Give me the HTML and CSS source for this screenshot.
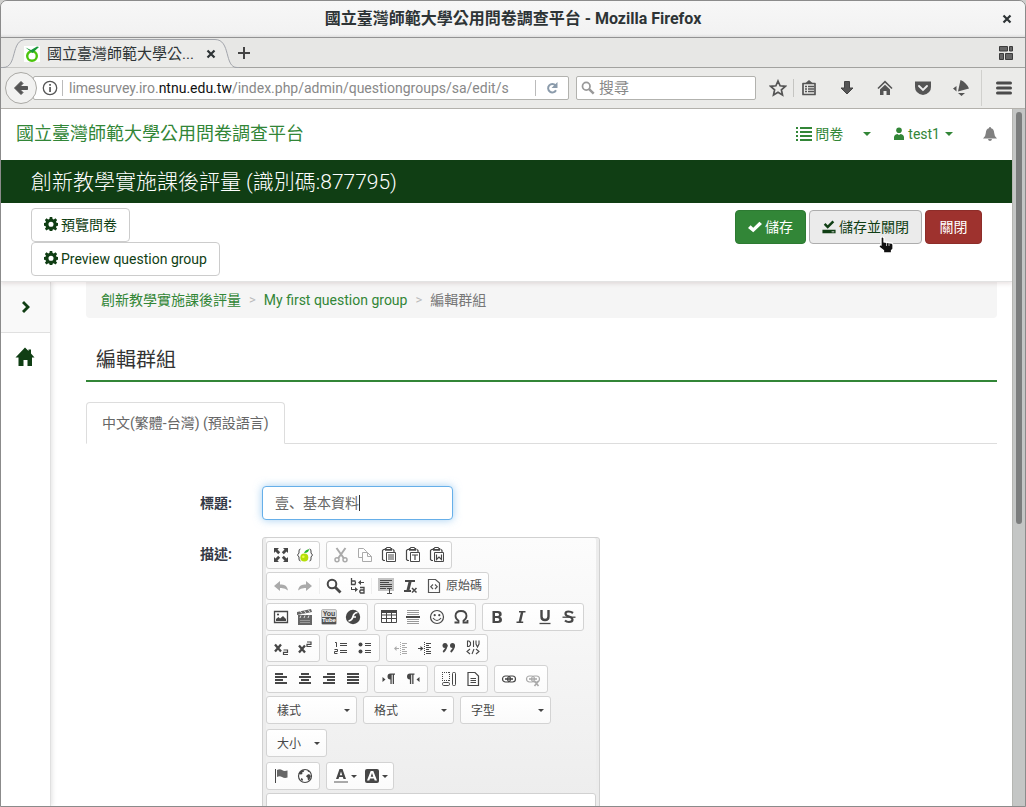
FILE: index.html
```html
<!DOCTYPE html>
<html lang="zh-Hant">
<head>
<meta charset="utf-8">
<title>國立臺灣師範大學公用問卷調查平台</title>
<link rel="stylesheet" href="styles.css">
</head>
<body>
<svg class="sprite" aria-hidden="true">
  <symbol id="gear" viewBox="0 0 16 16"><path fill-rule="evenodd" d="M6.600 0h2.800l.4 2.200 1.400.6 1.900-1.300 1.900 1.900-1.300 1.900.6 1.300 2.200.4v2.800l-2.200.4-.6 1.400 1.300 1.900-1.900 1.900-1.900-1.300-1.400.6-.4 2.200H6.600l-.4-2.200-1.400-.6-1.900 1.300L1 13.500l1.300-1.900-.6-1.400L-.5 9.800V7l2.200-.4.6-1.300L1 3.400l1.900-1.900 1.900 1.300 1.400-.6zM8 5.300a2.900 2.900 0 1 0 0 5.800 2.900 2.900 0 0 0 0-5.800z"/></symbol>
  <symbol id="check" viewBox="0 0 16 16"><path d="M0 9l3-3 3 2.800L13 2l3 2.600L6 14z"/></symbol>
  <symbol id="save" viewBox="0 0 16 16"><path d="M2 5.500L4 3.500 6.500 6 12 .500l2 2-7.500 7.500zM.500 11h15v4H.500z"/><path d="M11 13.500h3" stroke="#ebebeb"/></symbol>
  <symbol id="list" viewBox="0 0 16 14"><path d="M0 0h2v2H0zM4 0h12v2H4zM0 4h2v2H0zM4 4h12v2H4zM0 8h2v2H0zM4 8h12v2H4zM0 12h2v2H0zM4 12h12v2H4z"/></symbol>
  <symbol id="user" viewBox="0 0 12 14"><circle cx="6" cy="3.200" r="2.800"/><path d="M1 13V10.500q0-3 3.300-3.500l1.700 1 1.700-1Q11 7.500 11 10.500V13z"/></symbol>
  <symbol id="bell" viewBox="0 0 14 14"><path d="M7 0q1 0 1.100 1.200Q11 2 11.200 6q.2 4 2.800 5.500H0Q2.600 10 2.800 6 3 2 5.900 1.200 6 0 7 0zM5 12h4q-.3 2-2 2t-2-2z"/></symbol>
  <symbol id="chevron" viewBox="0 0 10 14"><path d="M1 3l2-2 6 6-6 6-2-2 4-4z"/></symbol>
  <symbol id="house" viewBox="0 0 20 20"><path d="M10 .500l3.500 3.500V2.500h2.500v4l3.500 4h-2.500V19h-4.500v-6h-4v6H3.500v-8.500H.500z"/></symbol>
  <symbol id="close" viewBox="0 0 10 10"><path d="M1.500 1.500l7 7m0-7l-7 7" stroke="currentColor" stroke-width="2.200"/></symbol>
  <symbol id="back" viewBox="0 0 16 16"><path d="M8 1.500l2 2L7 6.500h7.500v3H7l3 3-2 2L1.500 8z" stroke="currentColor" stroke-linejoin="round"/></symbol>
  <symbol id="info" viewBox="0 0 16 16"><circle cx="8" cy="8" r="6.700" fill="none" stroke="currentColor" stroke-width="1.300"/><path d="M7.200 4h1.700v1.700H7.200zM7.200 7h1.700v5H7.200z"/></symbol>
  <symbol id="reload" viewBox="0 0 12 12"><path d="M9.500 3.500A4.200 4.200 0 1 0 10 8.300" fill="none" stroke="currentColor" stroke-width="2"/><path d="M11.500 0v6h-6z"/></symbol>
  <symbol id="lens" viewBox="0 0 16 16"><circle cx="6" cy="6" r="4.300" fill="none" stroke="currentColor" stroke-width="2"/><path d="M9 9l5.500 5.500" stroke="currentColor" stroke-width="2.800"/></symbol>
  <symbol id="star" viewBox="0 0 18 18"><path d="M9 2l2.100 4.800 5.200.5-3.900 3.500 1.100 5.200L9 13.300 4.500 16l1.100-5.200-3.900-3.500 5.200-.5z" fill="none" stroke="currentColor" stroke-width="1.700"/></symbol>
  <symbol id="clip" viewBox="0 0 16 16"><path d="M2 3.500h12v11H2z" fill="none" stroke="currentColor" stroke-width="1.700" stroke-linejoin="round"/><path d="M4.500 3L8 0l3.500 3z"/><path d="M4 6.500h2m1 0h6M4 9h2m1 0h6M4 11.500h2m1 0h6" stroke="currentColor" stroke-width="1.300"/></symbol>
  <symbol id="down" viewBox="0 0 16 16"><path d="M5.500 1.500h5V8h3.500L8 14 2 8h3.500z" stroke="#444" stroke-linejoin="round"/></symbol>
  <symbol id="home" viewBox="0 0 16 16"><path d="M1 8.500L8 1.700l7 6.800" fill="none" stroke="currentColor" stroke-width="1.600"/><path d="M3 9.500l5-4.800 5 4.800V15H9.500v-4h-3v4H3z"/></symbol>
  <symbol id="pocket" viewBox="0 0 16 16"><path d="M0 1.500h16V7q0 6.500-8 8-8-1.500-8-8z"/><path d="M4 6l4 4 4-4" fill="none" stroke="#eee" stroke-width="1.900" stroke-linecap="round"/></symbol>
  <symbol id="addon" viewBox="0 0 16 16"><path d="M7.500 0Q13 2 16 8.500L5 11.500zM3.500 6v5.500L0 8.500zM5 13h7l-3.500 3z"/></symbol>
  <symbol id="grid" viewBox="0 0 14 14"><path d="M.500.500h8v4.500h-8zm10 0h3v4.500h-3zM.500 7.500h4v6h-4zm6 0h7v6h-7z" stroke="#3c3c3c"/></symbol>
  <symbol id="lime" viewBox="0 0 16 16"><circle cx="8" cy="10" r="4.800" fill="none" stroke="#4bc40c" stroke-width="2.400"/><path d="M1.500 1.500L7 4l6-3.500L15 1 8.500 7z" fill="#1a9a3a"/></symbol>

  <symbol id="maximize" viewBox="0 0 16 16"><path d="M1 1h5L4.500 2.500l2.700 2.700-2 2-2.700-2.700L1 6zM15 1v5l-1.500-1.500-2.700 2.700-2-2 2.700-2.700L10 1zM1 15v-5l1.500 1.500 2.700-2.700 2 2-2.700 2.700L6 15zM15 15h-5l1.500-1.500-2.700-2.700 2-2 2.700 2.700L15 10z"/></symbol>
  <symbol id="limebrace" viewBox="0 0 16 16"><path d="M3.500 2Q2 2 2 4v2L.500 8 2 10v2q0 2 1.500 2M12.500 2Q14 2 14 4v2l1.500 2L14 10v2q0 2-1.500 2" fill="none" stroke="currentColor"/><circle cx="7.300" cy="10.500" r="4" fill="#b5df09"/><circle cx="6.300" cy="9.800" r="1.300" fill="#ecff45"/><path d="M7 6q1-3 5-4 0 4-5 4" fill="#27b62d"/></symbol>
  <symbol id="cut" viewBox="0 0 16 16"><path d="M3.500 1L11 11.500M12.500 1L5 11.500" fill="none" stroke="currentColor" stroke-width="2"/><circle cx="4" cy="12.700" r="2" fill="none" stroke="currentColor" stroke-width="1.500"/><circle cx="12" cy="12.700" r="2" fill="none" stroke="currentColor" stroke-width="1.500"/></symbol>
  <symbol id="copy" viewBox="0 0 16 16"><path d="M5.500 10.500h-4v-9h5l3 3V6M5.500 5.500h5l4 4v5h-9zM10.500 5.500v4h4" fill="none" stroke="currentColor"/></symbol>
  <symbol id="paste" viewBox="0 0 16 16"><path d="M4 2.500H2.500l-1 1v9l1 1H4M12 2.500l1 1V5" fill="none" stroke="currentColor" stroke-width="1.200"/><path d="M4 3V1.500h1.500V.500h4v1H11V3zM5.500 5.500h9v9h-9z" fill="#fff" stroke="currentColor"/><path d="M4 2h7v1.500H4z"/></symbol>
  <symbol id="pastelines" viewBox="0 0 16 16"><use href="#paste"/><path d="M7 8h6M7 10h6M7 12h6" stroke="currentColor"/></symbol>
  <symbol id="pastetext" viewBox="0 0 16 16"><use href="#paste"/><path d="M7 8h6M10 8v5" stroke="currentColor" stroke-width="1.200"/></symbol>
  <symbol id="pasteword" viewBox="0 0 16 16"><use href="#paste"/><path d="M7.500 7.500v5L10 10l2.500 2.500v-5" fill="none" stroke="currentColor" stroke-width="1.200"/></symbol>
  <symbol id="undo" viewBox="0 0 16 16"><path d="M7 3v3.500q7-1 8 6-3-3-8-2.500v3L1 8z"/></symbol>
  <symbol id="redo" viewBox="0 0 16 16"><path d="M9 3v3.500q-7-1-8 6 3-3 8-2.500v3L15 8z"/></symbol>
  <symbol id="replace" viewBox="0 0 16 16"><path d="M1.500 0v6.500H5q1-2 0-3.500H1.500M10 9.500h4V15h-3.500q-1.500-1.500 0-3H14" fill="none" stroke="currentColor" stroke-width="1.300"/><path d="M8 4.500l3-2.500v2h3v1h-3v2zM8 11.500l-3-2.500v2H2v-2H1v3h4v2z"/></symbol>
  <symbol id="selectall" viewBox="0 0 16 16"><path d="M0 0h16v13H0z" fill="#c4c4c4"/><path d="M2 2.500h12M2 4.500h9M2 6.500h12M2 8.500h12M2 10.500h6M9 10.500h5M11.500 10.500v5M9 15.500h5" stroke="currentColor"/></symbol>
  <symbol id="removeformat" viewBox="0 0 16 16"><path d="M3 2h10v2H9.500l-2 8H9v2H2v-2h2.500l2-8H3z"/><path d="M10 10l4.500 4.500m0-4.500L10 14.500" stroke="currentColor" stroke-width="1.500"/></symbol>
  <symbol id="source" viewBox="0 0 16 16"><path d="M2.500 1.500h7l4 3.500v9.500h-11zM7 6.500L4.800 8.700 7 11m2-4.500l2.200 2.200L9 11" fill="none" stroke="currentColor" stroke-width="1.200"/></symbol>
  <symbol id="image" viewBox="0 0 16 16"><path d="M1.500 2.500h13v11h-13z" fill="none" stroke="currentColor" stroke-width="1.300"/><circle cx="5" cy="5.500" r="1.100"/><path d="M3 12v-2l2.500-2L7 9.500 10 7l3 3v2z"/></symbol>
  <symbol id="movie" viewBox="0 0 16 16"><path d="M1 6h14v10H1z" fill="#666"/><path d="M0 3L14 0l1 3L0 6z" fill="#666"/><path d="M3 2l2 2.500M7 1.500L9 4M11 .500L13 3M4 6.500L3 9M8 6.500L7 9M12 6.500l-1 2.500" stroke="#ddd"/><path d="M3 11.500h10M3 13.500h10" stroke="#999"/></symbol>
  <symbol id="flash" viewBox="0 0 16 16"><circle cx="8" cy="8" r="7.200"/><path d="M12.500 3.500q-3.500 0-4.500 4-1 4-4.500 4.500M7.500 8H11" fill="none" stroke="#fff" stroke-width="1.700"/></symbol>
  <symbol id="table" viewBox="0 0 16 16"><path d="M.500 2.500h15v11H.500zM.500 9.500h15M5.500 3v10.500M10.500 3v10.500M.500 6h15" fill="none" stroke="currentColor"/><path d="M0 1h16v3H0z"/></symbol>
  <symbol id="rule" viewBox="0 0 16 16"><path d="M2 1.500h12M2 3.500h12M2 5.500h12M2 10.500h12M2 12.500h12M2 14.500h12" stroke="#999"/><path d="M1 7h14v2H1z"/></symbol>
  <symbol id="smile" viewBox="0 0 16 16"><circle cx="8" cy="8" r="6.500" fill="none" stroke="currentColor" stroke-width="1.200"/><circle cx="5.700" cy="6.200" r="1.100"/><circle cx="10.300" cy="6.200" r="1.100"/><path d="M4 9q4 5 8 0" fill="none" stroke="currentColor" stroke-width="1.200"/></symbol>
  <symbol id="omega" viewBox="0 0 16 16"><path d="M1.500 13.500h4v-1.700Q2.500 9.800 2.500 6.800 2.700 2 8 2t5.500 4.800q0 3-3 5v1.700h4V11" fill="none" stroke="currentColor" stroke-width="1.800"/></symbol>
  <symbol id="bold" viewBox="0 0 16 16"><path fill-rule="evenodd" d="M3.500 2H9q3.700 0 3.700 3.200 0 2-1.800 2.600 2.100.5 2.100 2.900Q13 14 9 14H3.500zM6 4v3h2.300q1.800 0 1.800-1.500T8.300 4zm0 5v3h2.300q2 0 2-1.500T8.300 9z"/></symbol>
  <symbol id="italic" viewBox="0 0 16 16"><path d="M6 2h6.500v1.600h-2.200L8.200 12.400h2V14H3.500v-1.600h2.200L7.800 3.600H6z"/></symbol>
  <symbol id="underline" viewBox="0 0 16 16"><path d="M4.500 1v6.500q0 3.500 3.500 3.500t3.500-3.500V1" fill="none" stroke="currentColor" stroke-width="2.400"/><path d="M2.500 14.500h11" stroke="currentColor" stroke-width="1.300"/></symbol>
  <symbol id="strike" viewBox="0 0 16 16"><path d="M12 4q-2-1.500-4.500-1.500-3 0-3 2.200Q4.500 6.500 8 7.500t3.500 3.300Q11.500 13 8 13q-2.500 0-4-1.500" fill="none" stroke="currentColor" stroke-width="2.200"/><path d="M1.500 8.200h13" stroke="currentColor" stroke-width="1.300"/></symbol>
  <symbol id="subscript" viewBox="0 0 16 16"><path d="M2 4.500l6 7m0-7l-6 7" stroke="currentColor" stroke-width="2.300"/><path d="M10.500 10h4v2.300h-4v2.200H15" fill="none" stroke="currentColor" stroke-width="1.200"/></symbol>
  <symbol id="superscript" viewBox="0 0 16 16"><path d="M2 5.500l6 7m0-7l-6 7" stroke="currentColor" stroke-width="2.300"/><path d="M10 2h4v2.300h-4v2.200h4.500" fill="none" stroke="currentColor" stroke-width="1.200"/></symbol>
  <symbol id="numlist" viewBox="0 0 16 16"><path d="M2 2.500h1.500V7M1.500 9.500h3v2h-3v2h3M7 3.500h7M7 5.500h7M7 10.500h7M7 12.500h7" fill="none" stroke="currentColor"/></symbol>
  <symbol id="bullist" viewBox="0 0 16 16"><circle cx="3.500" cy="4.500" r="2"/><circle cx="3.500" cy="11.500" r="2"/><path d="M8 3.500h6M8 5.500h6M8 10.500h6M8 12.500h6" stroke="currentColor"/></symbol>
  <symbol id="outdent" viewBox="0 0 16 16"><path d="M7.500 2v13" stroke="currentColor" stroke-dasharray="1 1"/><path d="M9 3.500h5M9 5.500h3M9 7.500h5M9 9.500h3M9 11.500h5M9 13.500h5M2 8.500h4" stroke="currentColor"/><path d="M3.500 6v5L1 8.500z"/></symbol>
  <symbol id="indent" viewBox="0 0 16 16"><path d="M7.500 2v13" stroke="currentColor" stroke-dasharray="1 1"/><path d="M9 3.500h5M9 5.500h3M9 7.500h5M9 9.500h3M9 11.500h5M9 13.500h5M1 8.500h4" stroke="currentColor"/><path d="M3.500 6v5L6.500 8.500z"/></symbol>
  <symbol id="quote" viewBox="0 0 16 16"><circle cx="4" cy="5.500" r="2.500"/><circle cx="11.500" cy="5.500" r="2.500"/><path d="M5.700 5q0 4-3.500 7M13.200 5q0 4-3.500 7" fill="none" stroke="currentColor" stroke-width="1.700"/></symbol>
  <symbol id="div" viewBox="0 0 16 16"><path d="M2.500 1v5.500H4L5.500 5V2.500L4 1zM8.500.500V7M11 .500V4l1.500 3L14 4V.500M5 9l-3 2.500L5 14M11 9l3 2.500L11 14M9 9l-2 5" fill="none" stroke="currentColor" stroke-width="1.100"/></symbol>
  <symbol id="left" viewBox="0 0 16 16"><path d="M2 3h8M2 6h12M2 9h8M2 12h12" stroke="currentColor" stroke-width="2"/></symbol>
  <symbol id="center" viewBox="0 0 16 16"><path d="M4 3h8M2 6h12M4 9h8M2 12h12" stroke="currentColor" stroke-width="2"/></symbol>
  <symbol id="right" viewBox="0 0 16 16"><path d="M6 3h8M2 6h12M6 9h8M2 12h12" stroke="currentColor" stroke-width="2"/></symbol>
  <symbol id="justify" viewBox="0 0 16 16"><path d="M2 3h12M2 6h12M2 9h12M2 12h12" stroke="currentColor" stroke-width="2"/></symbol>
  <symbol id="ltr" viewBox="0 0 16 16"><path d="M1.500 6v5l3-2.500zM14 2.500v1.300h-1V13h-1.300V3.800h-1V13H9.400V8.500Q6.500 8.500 6.500 5.500t3-3z"/></symbol>
  <symbol id="rtl" viewBox="0 0 16 16"><path d="M14.500 6v5l-3-2.500zM9.500 2.500v1.300h-1V13H7.200V3.800h-1V13H4.900V8.500Q2 8.500 2 5.500t3-3z"/></symbol>
  <symbol id="blocks" viewBox="0 0 16 16"><path d="M1.500 1v9M8.500 1v9M1 1.500h8M1 9.500h8" fill="none" stroke="currentColor" stroke-dasharray="1 1"/><rect x="1.500" y="11.500" width="7" height="3" rx="1.200" fill="none" stroke="currentColor"/><rect x="11.500" y="1.500" width="3" height="13" rx="1" fill="none" stroke="currentColor"/></symbol>
  <symbol id="page" viewBox="0 0 16 16"><path d="M3 1.500h7l3.500 3.500v9.500H3zM5.500 7.500h5.500M5.500 9.500h5.500M5.500 11.500h5.500" fill="none" stroke="currentColor" stroke-width="1.200"/></symbol>
  <symbol id="link" viewBox="0 0 16 16"><rect x="1.500" y="5" width="8" height="6" rx="3" fill="none" stroke="currentColor" stroke-width="1.200"/><rect x="6.500" y="5" width="8" height="6" rx="3" fill="none" stroke="currentColor" stroke-width="1.200"/><path d="M4 8h8" stroke="currentColor" stroke-width="1.600"/></symbol>
  <symbol id="unlink" viewBox="0 0 16 16"><use href="#link"/><path d="M9.500 10l4 5m0-5l-4 5" stroke="currentColor" stroke-width="1.700"/></symbol>
  <symbol id="flag" viewBox="0 0 16 16"><path d="M2.500 1v14" stroke="currentColor"/><path d="M4 2q3-1.500 5 0t5.500.5v7q-3 1-5.500-.5t-5 0z" fill="#666"/></symbol>
  <symbol id="globe" viewBox="0 0 16 16"><circle cx="8" cy="8" r="6.500" fill="none" stroke="currentColor" stroke-width="1.200"/><path d="M2.500 4l3-2 2 .5-1 1.500-1.500.5.500 1.500-1.500.5L1.500 6zM10 7l2-1 2 2-1.500 3.500-1.500 1-.5-3L9 8.500zM4 10l2 1-.5 2L4 12zM10.500 2l2 1.500-1.500.5z" /></symbol>
  <symbol id="color" viewBox="0 0 16 16"><path fill-rule="evenodd" d="M6.500 1h3L13 11h-2.500l-.7-2H6.200l-.7 2H3zM8 3.500L6.800 7.200h2.400z"/><path d="M1 13h14v2H1z" fill="#aaa"/></symbol>
  <symbol id="bgcolor" viewBox="0 0 16 16"><rect x="1" y="1" width="14" height="14" rx="2"/><path fill-rule="evenodd" fill="#fff" d="M6.700 3h2.600L13 12.500h-2.300L10 10.500H6l-.7 2H3zM8 5L6.700 8.800h2.600z"/></symbol>
</svg>

<div class="window">
  <header class="titlebar">
    <h1 class="window-title">國立臺灣師範大學公用問卷調查平台 - Mozilla Firefox</h1>
    <button class="plain window-close" aria-label="Close window"><svg class="i10"><use href="#close"/></svg></button>
  </header>

  <div class="tabstrip">
    <div class="browser-tab">
      <svg class="tab-shape" viewBox="0 0 238 30" aria-hidden="true"><path d="M0 29.500h2C17 29.500 9 1.500 25 1.500H214C230 1.500 223 29.500 236 29.500h2" fill="#ebebe9" stroke="#a2a5ab"/></svg>
      <svg class="i16 tab-fav"><use href="#lime"/></svg>
      <span class="tab-name">國立臺灣師範大學公...</span>
      <button class="plain tab-close" aria-label="Close tab"><svg class="i10"><use href="#close"/></svg></button>
    </div>
    <button class="plain new-tab" aria-label="New tab"><svg viewBox="0 0 12 12" class="i12"><path d="M6 0v12M0 6h12" stroke="currentColor" stroke-width="2"/></svg></button>
    <button class="plain tab-groups" aria-label="Tab groups"><svg class="i14"><use href="#grid"/></svg></button>
  </div>

  <nav class="navbar">
    <button class="back" aria-label="Back"><svg class="i16"><use href="#back"/></svg></button>
    <div class="address">
      <svg class="i16 dark"><use href="#info"/></svg>
      <div class="url" role="textbox" contenteditable="true" spellcheck="false" aria-label="Address">limesurvey.iro.<b>ntnu.edu.tw</b>/index.php/admin/questiongroups/sa/edit/s</div>
      <button class="plain reload" aria-label="Reload"><svg class="i12"><use href="#reload"/></svg></button>
    </div>
    <label class="search"><svg class="i14"><use href="#lens"/></svg><input type="search" placeholder="搜尋" aria-label="搜尋"></label>
    <div class="nav-icons">
      <button class="plain star" aria-label="Bookmark"><svg class="i18"><use href="#star"/></svg></button>
      <button class="plain" aria-label="Library"><svg class="i16"><use href="#clip"/></svg></button>
      <button class="plain" aria-label="Downloads"><svg class="i16"><use href="#down"/></svg></button>
      <button class="plain" aria-label="Home"><svg class="i16"><use href="#home"/></svg></button>
      <button class="plain" aria-label="Pocket"><svg class="i16"><use href="#pocket"/></svg></button>
      <button class="plain" aria-label="Add-on"><svg class="i16"><use href="#addon"/></svg></button>
      <button class="plain menu" aria-label="Menu"><svg class="i16" viewBox="0 0 16 16"><path d="M1.500 3h13M1.500 8h13M1.500 13h13" stroke="currentColor" stroke-width="3" stroke-linecap="round"/></svg></button>
    </div>
  </nav>

  <div class="viewport">
    <div class="site">
      <header class="site-head">
        <a class="brand" href="#">國立臺灣師範大學公用問卷調查平台</a>
        <nav class="site-nav">
          <a href="#"><svg class="i-list"><use href="#list"/></svg>問卷</a>
          <a href="#" class="split" aria-label="問卷選單"><i class="caret"></i></a>
          <a href="#"><svg class="i-user"><use href="#user"/></svg>test1<i class="caret"></i></a>
          <a href="#" class="alerts" aria-label="通知"><svg class="i14"><use href="#bell"/></svg></a>
        </nav>
      </header>
      <h2 class="survey-title">創新教學實施課後評量 (識別碼:877795)</h2>
      <div class="actions">
        <div class="previews">
          <button class="btn"><svg class="i14"><use href="#gear"/></svg>預覽問卷</button>
          <button class="btn"><svg class="i14"><use href="#gear"/></svg>Preview question group</button>
        </div>
        <div class="saves">
          <button class="btn primary"><svg class="i14"><use href="#check"/></svg>儲存</button>
          <button class="btn hovered"><svg class="i14"><use href="#save"/></svg>儲存並關閉
            <svg class="pointer" viewBox="0 0 16 18" aria-hidden="true"><path d="M3 1.500q1.500-1.500 3 .5V6l7.500 1q1.500.5 1.500 2v4l-1.500 1.500V17h-8v-2.500L1 11q0-2.500 2-2z" fill="#111" stroke="#fff" stroke-width="1.300"/><path d="M8.500 7v3M11 7.500v2.500" stroke="#fff" stroke-width=".7"/></svg>
          </button>
          <button class="btn danger">關閉</button>
        </div>
      </div>

      <div class="body">
        <aside class="sidebar">
          <button class="plain expand" aria-label="Expand menu"><svg class="i-chev"><use href="#chevron"/></svg></button>
          <a class="side-home" href="#" aria-label="Home"><svg class="i20"><use href="#house"/></svg></a>
        </aside>
        <main class="content">
          <nav class="crumbs"><a href="#">創新教學實施課後評量</a><span class="sep">&gt;</span><a href="#">My first question group</a><span class="sep">&gt;</span><span>編輯群組</span></nav>
          <h3 class="page-title">編輯群組</h3>
          <div class="tabs" role="tablist"><button class="tab" role="tab" aria-selected="true">中文(繁體-台灣) (預設語言)</button></div>
          <form class="form">
            <label for="title">標題:</label>
            <div class="title-field"><input id="title" type="text" lang="zh-Hans" value="壹、基本資料"><span class="text-caret"></span></div>
            <label for="description">描述:</label>
            <div class="editor">
              <div class="row">
                <div class="group"><button type="button" aria-label="Maximize"><svg><use href="#maximize"/></svg></button><button type="button" aria-label="Placeholder fields"><svg><use href="#limebrace"/></svg></button></div>
                <div class="group"><button type="button" disabled aria-label="Cut"><svg><use href="#cut"/></svg></button><button type="button" disabled aria-label="Copy"><svg><use href="#copy"/></svg></button><button type="button" aria-label="Paste"><svg><use href="#pastelines"/></svg></button><button type="button" aria-label="Paste as text"><svg><use href="#pastetext"/></svg></button><button type="button" aria-label="Paste from Word"><svg><use href="#pasteword"/></svg></button></div>
              </div>
              <div class="row">
                <div class="group"><button type="button" disabled aria-label="Undo"><svg><use href="#undo"/></svg></button><button type="button" disabled aria-label="Redo"><svg><use href="#redo"/></svg></button><i class="divider"></i><button type="button" aria-label="Find"><svg><use href="#lens"/></svg></button><button type="button" aria-label="Replace"><svg><use href="#replace"/></svg></button><i class="divider"></i><button type="button" aria-label="Select all"><svg><use href="#selectall"/></svg></button><button type="button" aria-label="Remove format"><svg><use href="#removeformat"/></svg></button><button type="button" class="labelled"><svg><use href="#source"/></svg>原始碼</button></div>
              </div>
              <div class="row">
                <div class="group"><button type="button" aria-label="Image"><svg><use href="#image"/></svg></button><button type="button" aria-label="Video"><svg><use href="#movie"/></svg></button><button type="button" aria-label="YouTube"><span class="youtube"><span>You</span><span class="tube">Tube</span></span></button><button type="button" aria-label="Flash"><svg><use href="#flash"/></svg></button></div>
                <div class="group"><button type="button" aria-label="Table"><svg><use href="#table"/></svg></button><button type="button" aria-label="Horizontal line"><svg><use href="#rule"/></svg></button><button type="button" aria-label="Smiley"><svg><use href="#smile"/></svg></button><button type="button" aria-label="Special character"><svg><use href="#omega"/></svg></button></div>
                <div class="group"><button type="button" aria-label="Bold"><svg><use href="#bold"/></svg></button><button type="button" aria-label="Italic"><svg><use href="#italic"/></svg></button><button type="button" aria-label="Underline"><svg><use href="#underline"/></svg></button><button type="button" aria-label="Strikethrough"><svg><use href="#strike"/></svg></button></div>
              </div>
              <div class="row">
                <div class="group"><button type="button" aria-label="Subscript"><svg><use href="#subscript"/></svg></button><button type="button" aria-label="Superscript"><svg><use href="#superscript"/></svg></button></div>
                <div class="group"><button type="button" aria-label="Numbered list"><svg><use href="#numlist"/></svg></button><button type="button" aria-label="Bulleted list"><svg><use href="#bullist"/></svg></button></div>
                <div class="group"><button type="button" disabled aria-label="Outdent"><svg><use href="#outdent"/></svg></button><button type="button" aria-label="Indent"><svg><use href="#indent"/></svg></button><button type="button" aria-label="Quote"><svg><use href="#quote"/></svg></button><button type="button" aria-label="Div container"><svg><use href="#div"/></svg></button></div>
              </div>
              <div class="row">
                <div class="group"><button type="button" aria-label="Align left"><svg><use href="#left"/></svg></button><button type="button" aria-label="Center"><svg><use href="#center"/></svg></button><button type="button" aria-label="Align right"><svg><use href="#right"/></svg></button><button type="button" aria-label="Justify"><svg><use href="#justify"/></svg></button></div>
                <div class="group"><button type="button" aria-label="Left to right"><svg><use href="#ltr"/></svg></button><button type="button" aria-label="Right to left"><svg><use href="#rtl"/></svg></button></div>
                <div class="group"><button type="button" aria-label="Show blocks"><svg><use href="#blocks"/></svg></button><button type="button" aria-label="Templates"><svg><use href="#page"/></svg></button></div>
                <div class="group"><button type="button" aria-label="Link"><svg><use href="#link"/></svg></button><button type="button" disabled aria-label="Unlink"><svg><use href="#unlink"/></svg></button></div>
              </div>
              <div class="row combos">
                <div class="combo"><select aria-label="樣式"><option>樣式</option></select></div>
                <div class="combo"><select aria-label="格式"><option>格式</option></select></div>
                <div class="combo"><select aria-label="字型"><option>字型</option></select></div>
              </div>
              <div class="row combos">
                <div class="combo small"><select aria-label="大小"><option>大小</option></select></div>
              </div>
              <div class="row">
                <div class="group"><button type="button" aria-label="Anchor"><svg><use href="#flag"/></svg></button><button type="button" aria-label="IFrame"><svg><use href="#globe"/></svg></button></div>
                <div class="group"><button type="button" class="drop" aria-label="Text colour"><svg><use href="#color"/></svg></button><button type="button" class="drop" aria-label="Background colour"><svg><use href="#bgcolor"/></svg></button></div>
              </div>
              <textarea id="description"></textarea>
            </div>
          </form>
        </main>
      </div>
    </div>
    <div class="scrollbar" aria-hidden="true"><div class="thumb"></div></div>
  </div>
</div>
</body>
</html>
```
FILE: styles.css
```css
* { box-sizing: border-box; }

:root {
  --green: #328637;
  --deep: #103e14;
  --chrome-text: #2e3436;
}

body {
  margin: 0;
  background: #cfcfcd;
  font: 14px/20px Roboto, "Noto Sans CJK TC", sans-serif;
  color: #333;
}

h1, h2, h3 { margin: 0; font-weight: 400; }
a { color: var(--green); text-decoration: none; }
button, input, select, textarea { font: inherit; color: inherit; }
svg { fill: currentColor; flex: none; }

.sprite { position: absolute; width: 0; height: 0; overflow: hidden; }
.i10 { width: 10px; height: 10px; }
.i12 { width: 12px; height: 12px; }
.i14 { width: 14px; height: 14px; }
.i16 { width: 16px; height: 16px; }
.i18 { width: 18px; height: 18px; }
.i20 { width: 20px; height: 20px; }
.i-list { width: 16px; height: 14px; }
.i-user { width: 12px; height: 14px; }
.i-chev { width: 10px; height: 14px; }

.plain {
  display: flex;
  align-items: center;
  justify-content: center;
  padding: 0;
  border: 0;
  background: none;
}

/* Browser frame */
.window {
  display: flex;
  flex-direction: column;
  height: 100vh;
  border: 1px solid #8b8b8b;
  border-radius: 7px 7px 0 0;
  background: #ebebe9;
  overflow: hidden;
  font-family: Roboto, "Noto Sans CJK TC", sans-serif;
}

.titlebar {
  display: flex;
  align-items: center;
  flex: none;
  height: 37px;
  padding: 0 12px 0 24px;
  border-bottom: 1px solid #929292;
  background: linear-gradient(#f7f7f7, #f2f2f2 92%, #dedede);
  color: var(--chrome-text);
}
.window-title {
  flex: 1;
  font-size: 16px;
  font-weight: 700;
  line-height: 24px;
  text-align: center;
}
.window-close { width: 12px; height: 24px; }

.tabstrip {
  display: flex;
  align-items: center;
  flex: none;
  height: 30px;
  padding-right: 12px;
  border-bottom: 1px solid #a2a29f;
  background: #e7e7e5;
  color: var(--chrome-text);
}
.browser-tab {
  position: relative;
  display: flex;
  align-items: center;
  align-self: stretch;
  width: 237px;
  padding: 2px 22px 0 23px;
  font-size: 15px;
}
.browser-tab > * { position: relative; }
.browser-tab > .tab-shape { position: absolute; inset: 0; width: 238px; height: 30px; }
.tab-fav { margin-right: 7px; background: #fff; }
.tab-name { flex: 1; white-space: nowrap; }
.new-tab { width: 12px; height: 20px; color: #444; }
.tab-groups { margin-left: auto; color: #666; }

.navbar {
  display: flex;
  align-items: center;
  flex: none;
  height: 41px;
  padding: 0 6px 0 4px;
  border-bottom: 1px solid #b3b1ac;
  color: #555;
}
.back {
  z-index: 1;
  display: flex;
  align-items: center;
  justify-content: center;
  width: 32px;
  height: 32px;
  padding: 0;
  border: 1px solid #aaa9a5;
  border-radius: 50%;
  background: #f2f2f1;
}
.address, .search {
  display: flex;
  align-items: center;
  height: 24px;
  border: 1px solid #b2b2ae;
  background: #fff;
  border-radius: 2px;
}
.address {
  flex: 538 1 0;
  min-width: 0;
  margin: 0 7px 0 -4px;
  padding-left: 8px;
  color: #888;
}
.dark { color: #555; }
.url {
  flex: 1;
  min-width: 0;
  margin: 0 20px 0 4px;
  padding-left: 7px;
  background: linear-gradient(#bbb, #bbb) 0 50% / 1px 16px no-repeat;
  line-height: 22px;
  overflow: hidden;
  white-space: nowrap;
}
.url b { font-weight: 400; color: #111; }
.reload { width: 33px; height: 16px; border-left: 1px solid #bbb; color: #8b9bab; }
.search { flex: 178 1 0; min-width: 0; padding-left: 4px; color: #999; }
.search input {
  flex: 1;
  min-width: 0;
  padding: 0 4px;
  border: 0;
  background: none;
  font-size: 15px;
  line-height: 22px;
}
.search input::placeholder { color: #888; opacity: 1; }
.nav-icons { display: flex; align-items: center; padding-left: 7px; }
.nav-icons button { width: 38px; height: 18px; }
.nav-icons .star { width: 31px; border-right: 1px solid #c5c5c2; }
.nav-icons .star + button { width: 30px; margin-right: 4px; }
.nav-icons .menu { height: 36px; margin-left: 1px; border-left: 1px solid #d0d0cd; padding-left: 6px; color: #4b4b4b; }

.viewport { display: flex; flex: 1; min-height: 0; }
.scrollbar {
  flex: none;
  width: 13px;
  padding: 3px 3px 0;
  border-left: 1px solid #b5b6b2;
  background: #c4c6c5;
}
.thumb { height: 412px; max-height: 60%; border-radius: 4px; background: #7b7d7d; }

/* Site */
.site {
  display: flex;
  flex-direction: column;
  flex: 1;
  min-width: 0;
  background: #fff;
  overflow: hidden;
}
.site-head {
  display: flex;
  align-items: center;
  justify-content: space-between;
  flex: none;
  height: 51px;
  padding: 0 15px 1px;
}
.brand { font-size: 18px; }
.site-nav { display: flex; align-items: center; }
.site-nav a { display: flex; align-items: center; gap: 3px; }
.site-nav .split { margin: 0 22px 0 18px; }
.site-nav .alerts { margin-left: 30px; color: #808080; }
.caret {
  border: 4px solid transparent;
  border-top-color: currentColor;
  border-bottom: 0;
}
.site-nav .caret { margin-left: 2px; }

.survey-title {
  flex: none;
  padding: 8px 30px 7px;
  background: var(--deep);
  color: #fff;
  font-size: 21px;
  font-weight: 300;
  line-height: 28px;
}

.actions {
  position: relative;
  z-index: 2;
  display: flex;
  justify-content: space-between;
  flex: none;
  padding: 5px 30px 5px;
  border-bottom: 1px solid #e3e3e3;
  background: #fff;
  box-shadow: 0 2px 4px rgba(90, 40, 40, .12);
}
.previews { display: flex; flex-direction: column; align-items: flex-start; }
.previews svg { margin-bottom: 2px; }
.saves { display: flex; align-items: flex-start; gap: 3px; padding-top: 2px; }
.btn {
  position: relative;
  display: flex;
  align-items: center;
  justify-content: center;
  gap: 3px;
  padding: 6px 12px;
  border: 1px solid #ccc;
  border-radius: 4px;
  background: #fff;
  color: var(--deep);
}
.btn.primary { border-color: #2d7a32; background: var(--green); color: #fff; }
.btn.hovered { border-color: #adadad; background: #ebebeb; }
.btn.danger { min-width: 57px; border-color: #8d2d29; background: #9e322e; color: #fff; }
.pointer { position: absolute; left: 68px; top: 25px; width: 16px; height: 18px; }

.body { display: flex; flex: 1; min-height: 0; }
.sidebar {
  flex: none;
  width: 50px;
  border-right: 1px solid #e0e0e0;
  box-shadow: 1px 0 5px rgba(0, 0, 0, .12);
  color: var(--deep);
}
.expand {
  width: 100%;
  height: 51px;
  border-bottom: 1px solid #e0e0e0;
  background: #f9f9f9;
}
.side-home { display: flex; justify-content: center; padding: 14px 2px 0 0; color: var(--deep); }

.content { flex: 1; min-width: 0; padding: 0 15px 0 35px; overflow: hidden; }
.crumbs {
  display: flex;
  padding: 8px 15px;
  border-radius: 0 0 4px 4px;
  background: #f5f5f5;
  color: #777;
}
.sep { padding: 0 8px; font-size: 13px; color: #bbb; }
.page-title {
  margin: 20px 0;
  padding: 8px 10px 6px;
  border-bottom: 2px solid var(--green);
  font-size: 20px;
  line-height: 28px;
}
.tabs { display: flex; border-bottom: 1px solid #ddd; }
.tab {
  margin-bottom: -1px;
  padding: 10px 15px;
  border: 1px solid #ddd;
  border-bottom-color: #fff;
  border-radius: 4px 4px 0 0;
  background: #fff;
  color: #666;
}

.form {
  display: grid;
  grid-template-columns: 146px minmax(0, 1fr);
  gap: 17px 30px;
  align-items: start;
  padding-top: 42px;
}
.form label { padding-top: 7px; font-weight: 700; text-align: right; color: #333845; }
.title-field { position: relative; width: 191px; }
.title-field input {
  display: block;
  width: 100%;
  height: 34px;
  padding: 5px 12px 7px;
  border: 1px solid #66afe9;
  border-radius: 4px;
  outline: 0;
  background: #fff;
  color: #666;
  font-family: Roboto, "Noto Sans CJK SC", sans-serif;
  box-shadow: 0 0 8px rgba(102, 175, 233, .6);
}
.text-caret { position: absolute; left: 97px; top: 9px; width: 1px; height: 16px; background: #333; }

/* Rich text editor */
.editor {
  display: flex;
  flex-direction: column;
  gap: 4px;
  width: 338px;
  padding: 3px 3px 0;
  border: 1px solid #d1d1d1;
  border-radius: 3px;
  background: linear-gradient(#fcfcfc, #ededed 260px);
  box-shadow: inset 3px 0 #ececec, inset -3px 0 #ececec;
  color: #474747;
  font-size: 12px;
}
.row { display: flex; gap: 6px; }
.group {
  display: flex;
  align-items: center;
  height: 28px;
  margin-bottom: -1px;
  padding: 0 2px;
  border: 1px solid #d3d3d3;
  border-radius: 3px;
  background: linear-gradient(#fff, #fbfbfb);
}
.group button {
  display: flex;
  align-items: center;
  height: 24px;
  padding: 0 4px;
  border: 0;
  background: none;
}
.group svg { width: 16px; height: 16px; }
.group button:disabled { color: #aaa; }
.group .labelled { gap: 4px; color: #555; }
.divider { width: 1px; height: 16px; margin: 0 2px; background: #eee; }
.divider ~ .divider { margin-left: 1px; }
.youtube {
  display: flex;
  flex-direction: column;
  width: 16px;
  height: 16px;
  border: 1px solid #bbb;
  border-radius: 2px;
  background: #ddd;
  font: 700 7px/7px "Liberation Sans", sans-serif;
}
.tube { background: #555; color: #fff; font-size: 6px; }
.drop::after, .combo::after {
  content: "";
  border: 3px solid transparent;
  border-top-color: #444;
  border-bottom: 0;
}
.group .drop { gap: 2px; padding: 0 3px 0 4px; }
.combos { margin-bottom: 1px; }
.combo {
  display: flex;
  align-items: center;
  width: 91px;
  padding-right: 6px;
  border: 1px solid #d3d3d3;
  border-radius: 3px;
  background: linear-gradient(#fff, #fafafa);
}
.combo.small { width: 61px; }
.combo select {
  flex: 1;
  min-width: 0;
  height: 26px;
  padding: 2px 0 0 10px;
  border: 0;
  appearance: none;
  background: none;
}
.editor textarea {
  height: 200px;
  border: 1px solid #d1d1d1;
  border-radius: 3px 3px 0 0;
  background: #fff;
  resize: none;
}
```
